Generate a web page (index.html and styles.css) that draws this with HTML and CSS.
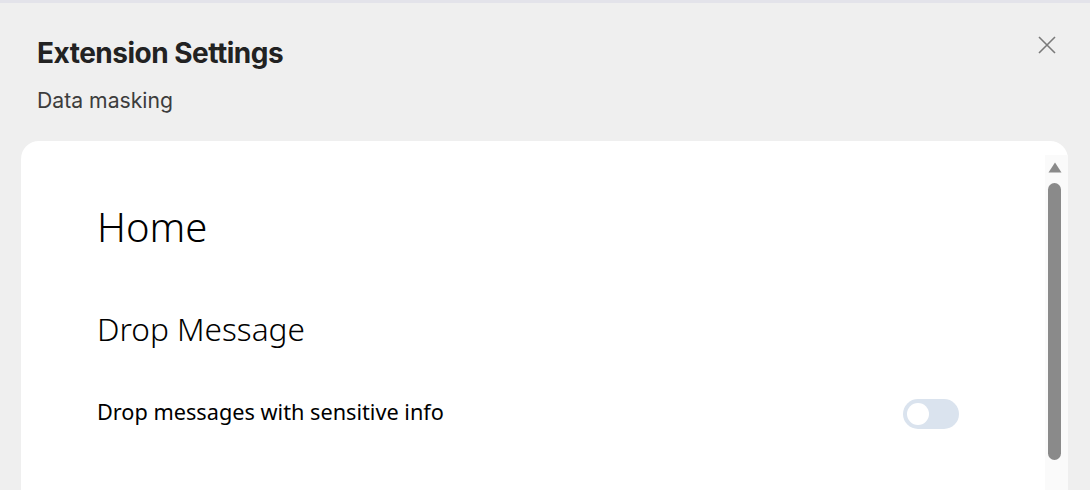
FILE: index.html
```html
<!DOCTYPE html>
<html>
<head>
<meta charset="utf-8">
<link rel="stylesheet" href="styles.css">
</head>
<body>
<div class="topline"></div>
<header class="header">
  <div class="titles">
    <h1 class="title">Extension Settings</h1>
    <div class="subtitle">Data masking</div>
  </div>
  <button class="close" aria-label="Close">
    <svg width="18" height="18" viewBox="0 0 18 18"><path d="M1 1L17 17M17 1L1 17" stroke="#7a7a7a" stroke-width="1.6" fill="none"/></svg>
  </button>
</header>
<main class="card">
  <div class="content">
    <h2 class="home">Home</h2>
    <h3 class="section">Drop Message</h3>
    <div class="row">
      <span class="label">Drop messages with sensitive info</span>
      <span class="toggle"><span class="knob"></span></span>
    </div>
  </div>
  <div class="scrollbar">
    <svg class="arrow" width="14" height="11" viewBox="0 0 14 11"><path d="M7 0.5L13.5 10.5H0.5Z" fill="#8a8a8a"/></svg>
    <div class="thumb"></div>
  </div>
</main>
</body>
</html>
```
FILE: styles.css
```css
html, body {
  margin: 0;
  padding: 0;
  background: #efefef;
  height: 100%;
  overflow: hidden;
}
body {
  font-family: "Noto Sans", sans-serif;
  color: #000;
  display: flex;
  flex-direction: column;
}
.topline {
  height: 3px;
  flex: none;
  background: #e3e3ea;
}
.header {
  display: flex;
  justify-content: space-between;
  align-items: flex-start;
  padding: 32px 34px 0 37px;
  height: 106px;
  flex: none;
}
.title {
  margin: 0;
  font-family: "Inter", sans-serif;
  font-weight: 700;
  font-size: 28px;
  letter-spacing: -0.5px;
  color: #222;
  line-height: 36px;
}
.subtitle {
  margin-top: 17px;
  font-family: "Inter", sans-serif;
  font-size: 21.2px;
  color: #3c3c3c;
  line-height: 24px;
}
.close {
  border: 0;
  background: none;
  padding: 0;
  margin-top: 1px;
  width: 18px;
  height: 18px;
}
.card {
  flex: 1;
  min-height: 0;
  margin: 0 22px 0 21px;
  background: #fff;
  border-radius: 18px 18px 0 0;
  display: flex;
}
.content {
  flex: 1;
  padding: 62px 86px 0 76px;
}
.home {
  margin: 0;
  font-weight: 300;
  font-size: 40px;
  line-height: 48px;
}
.section {
  margin: 58px 0 0;
  font-weight: 300;
  font-size: 31.6px;
  line-height: 40px;
}
.row {
  display: flex;
  justify-content: space-between;
  align-items: center;
  margin-top: 50px;
}
.label {
  font-size: 21.7px;
  font-weight: 400;
  margin-top: -6px;
}
.toggle {
  width: 56px;
  height: 30px;
  border-radius: 15px;
  background: #dae3ee;
  display: flex;
  align-items: center;
  padding-left: 4px;
  box-sizing: border-box;
}
.knob {
  width: 22px;
  height: 22px;
  border-radius: 50%;
  background: #fff;
}
.scrollbar {
  width: 23px;
  margin-top: 14px;
  background: #fafafa;
  display: flex;
  flex-direction: column;
  align-items: center;
}
.arrow {
  margin-top: 7px;
  margin-left: -3px;
}
.thumb {
  margin-top: 10px;
  width: 13px;
  height: 277px;
  margin-left: -4px;
  border-radius: 7px;
  background: #8a8a8a;
}
```
